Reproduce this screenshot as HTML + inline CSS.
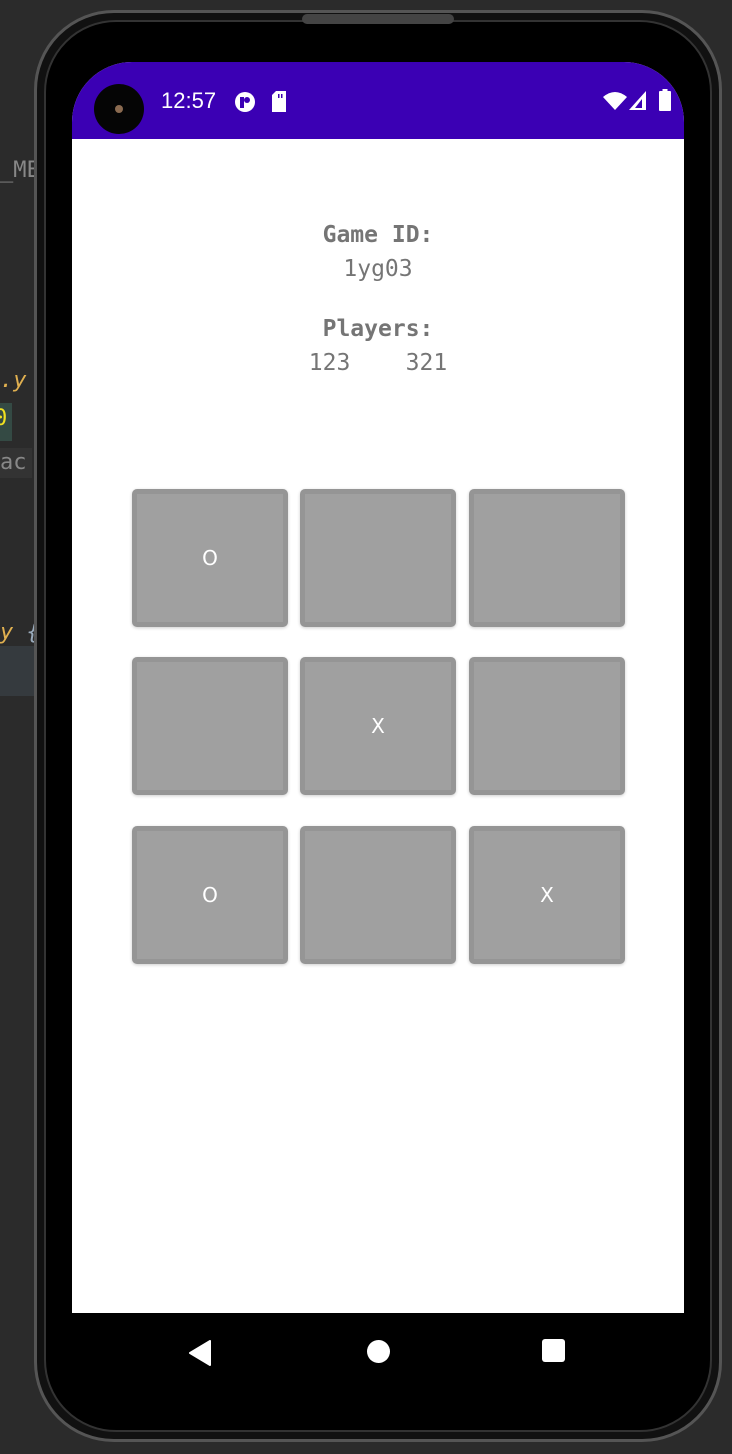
<!DOCTYPE html>
<html><head><meta charset="utf-8"><style>
html,body{margin:0;padding:0;}
body{width:732px;height:1454px;background:#2b2b2b;position:relative;overflow:hidden;font-family:"Liberation Sans",sans-serif;}
.phone{position:absolute;left:34px;top:10px;width:688px;height:1432px;border-radius:80px;background:#111;border:3px solid #555;box-sizing:border-box;}
.phone2{position:absolute;left:44px;top:20px;width:668px;height:1412px;border-radius:72px;background:#000;border:2px solid #333;box-sizing:border-box;}
.grille{position:absolute;left:302px;top:14px;width:152px;height:10px;border-radius:5px;background:#444;}
.screen{position:absolute;left:72px;top:62px;width:612px;height:1251px;background:#fff;border-radius:60px 60px 0 0;overflow:hidden;}
.status{position:absolute;left:0;top:0;width:612px;height:77px;background:#3b00b4;}
.cam{position:absolute;left:22px;top:22px;width:50px;height:50px;border-radius:50%;background:#050505;}
.cam i{position:absolute;left:21px;top:21px;width:8px;height:8px;border-radius:50%;background:#8a6a50;}
.time{position:absolute;left:89px;top:26px;color:#fff;font-size:22px;}
.txt{position:absolute;left:0;width:612px;text-align:center;color:#757575;font-family:"DejaVu Sans Mono",monospace;font-size:23px;line-height:28px;white-space:pre;}
.b{font-weight:bold;}
.cell{position:absolute;width:156px;height:138px;background:#a0a0a0;border:5px solid #959595;border-radius:5px;box-sizing:border-box;color:#fff;font-family:"DejaVu Sans",sans-serif;font-size:20px;display:flex;align-items:center;justify-content:center;box-shadow:0 1px 3px rgba(0,0,0,.2);}
.nav{position:absolute;left:72px;top:1313px;width:612px;height:80px;background:#000;}
.ide{position:absolute;font-family:"DejaVu Sans Mono",monospace;font-size:22px;}
</style></head><body>
<div class="ide" style="left:0;top:158px;color:#888">_ME</div>
<div class="ide" style="left:0;top:368px;color:#e0b050;font-style:italic">.y</div>
<div style="position:absolute;left:0;top:403px;width:12px;height:38px;background:#344a44"></div>
<div class="ide" style="left:-6px;top:406px;color:#f0e020">0</div>
<div style="position:absolute;left:0;top:448px;width:32px;height:30px;background:#333"></div>
<div class="ide" style="left:0;top:450px;color:#888">ac</div>
<div class="ide" style="left:0;top:620px;color:#e0b050;font-style:italic">y <span style="color:#9ab">{</span></div>
<div style="position:absolute;left:0;top:646px;width:34px;height:50px;background:#353a3e"></div>
<div class="phone"></div>
<div class="phone2"></div>
<div class="grille"></div>
<div class="screen">
 <div class="status">
  <div class="cam"><i></i></div>
  <div class="time">12:57</div>
  <svg style="position:absolute;left:162px;top:29px" width="22" height="22" viewBox="0 0 22 22"><circle cx="11" cy="11" r="10" fill="#fff"/><rect x="6" y="6" width="4" height="11" fill="#3b00b4"/><circle cx="13" cy="9" r="3" fill="#3b00b4"/></svg>
  <svg style="position:absolute;left:199px;top:29px" width="16" height="21" viewBox="0 0 16 21"><path d="M5 0H15V21H1V4Z" fill="#fff"/><rect x="7" y="3" width="1.5" height="4" fill="#3b00b4"/><rect x="10" y="3" width="1.5" height="4" fill="#3b00b4"/></svg>
  <svg style="position:absolute;left:531px;top:29px" width="24" height="19" viewBox="0 0 24 19"><path d="M0 6Q12 -4 24 6L12 19Z" fill="#fff"/></svg>
  <svg style="position:absolute;left:557px;top:29px" width="18" height="19" viewBox="0 0 18 19"><path d="M17 0V19H0Z" fill="#fff"/><path d="M13 8V17H6Z" fill="#3b00b4"/></svg>
  <svg style="position:absolute;left:587px;top:27px" width="12" height="22" viewBox="0 0 12 22"><rect x="3.5" y="0" width="5" height="3" fill="#fff"/><rect x="0" y="2" width="12" height="20" rx="1" fill="#fff"/></svg>
 </div>
 <div class="txt b" style="top:159px">Game ID:</div>
 <div class="txt" style="top:193px">1yg03</div>
 <div class="txt b" style="top:253px">Players:</div>
 <div class="txt" style="top:287px">123    321</div>
</div>
<div class="cell" style="left:132px;top:489px">O</div>
<div class="cell" style="left:300px;top:489px"></div>
<div class="cell" style="left:469px;top:489px"></div>
<div class="cell" style="left:132px;top:657px"></div>
<div class="cell" style="left:300px;top:657px">X</div>
<div class="cell" style="left:469px;top:657px"></div>
<div class="cell" style="left:132px;top:826px">O</div>
<div class="cell" style="left:300px;top:826px"></div>
<div class="cell" style="left:469px;top:826px">X</div>
<div class="nav">
 <svg style="position:absolute;left:116px;top:27px" width="24" height="26" viewBox="0 0 24 26"><path d="M22 1V25L2 13Z" fill="#fff" stroke="#fff" stroke-linejoin="round" stroke-width="2"/></svg>
 <div style="position:absolute;left:295px;top:27px;width:23px;height:23px;border-radius:50%;background:#fff"></div>
 <div style="position:absolute;left:470px;top:26px;width:23px;height:23px;border-radius:3px;background:#fff"></div>
</div>
</body></html>
